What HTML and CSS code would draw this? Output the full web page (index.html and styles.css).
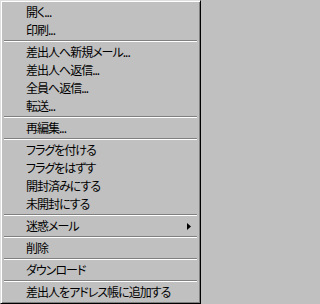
FILE: index.html
```html
<!DOCTYPE html>
<html lang="ja">
<head>
<meta charset="utf-8">
<link rel="stylesheet" href="styles.css">
</head>
<body>
<div class="menu">
  <div class="item">開く...</div>
  <div class="item">印刷...</div>
  <div class="sep"></div>
  <div class="item">差出人へ新規メール...</div>
  <div class="item">差出人へ返信...</div>
  <div class="item">全員へ返信...</div>
  <div class="item">転送...</div>
  <div class="sep"></div>
  <div class="item">再編集...</div>
  <div class="sep"></div>
  <div class="item">フラグを付ける</div>
  <div class="item">フラグをはずす</div>
  <div class="item">開封済みにする</div>
  <div class="item">未開封にする</div>
  <div class="sep"></div>
  <div class="item">迷惑メール<svg class="arrow" width="4" height="7" viewBox="0 0 4 7"><path d="M0 0 L4 3.5 L0 7 Z" fill="#000"/></svg></div>
  <div class="sep"></div>
  <div class="item">削除</div>
  <div class="sep"></div>
  <div class="item">ダウンロード</div>
  <div class="sep"></div>
  <div class="item">差出人をアドレス帳に追加する</div>
</div>
</body>
</html>
```
FILE: styles.css
```css
html, body {
  margin: 0;
  padding: 0;
  background: #c0c0c0;
}
.menu {
  box-sizing: border-box;
  width: 201px;
  height: 304px;
  background: #c0c0c0;
  border: 1px solid;
  border-color: #dfdfdf #000000 #000000 #dfdfdf;
  box-shadow: inset 1px 1px 0 #ffffff, inset -1px -1px 0 #808080;
  padding: 2px;
  display: flex;
  flex-direction: column;
  font-family: "Noto Sans CJK JP", "Noto Sans", sans-serif;
  font-size: 12px;
  font-feature-settings: "palt";
  letter-spacing: -1px;
  color: #000;
}
.item {
  height: 18px;
  line-height: 18px;
  padding-left: 23px;
  display: flex;
  align-items: center;
  white-space: nowrap;
}
.arrow {
  margin-left: auto;
  margin-right: 7px;
}
.sep {
  margin: 1px 1px;
  height: 0;
  border-top: 1px solid #808080;
  border-bottom: 1px solid #ffffff;
}
```
